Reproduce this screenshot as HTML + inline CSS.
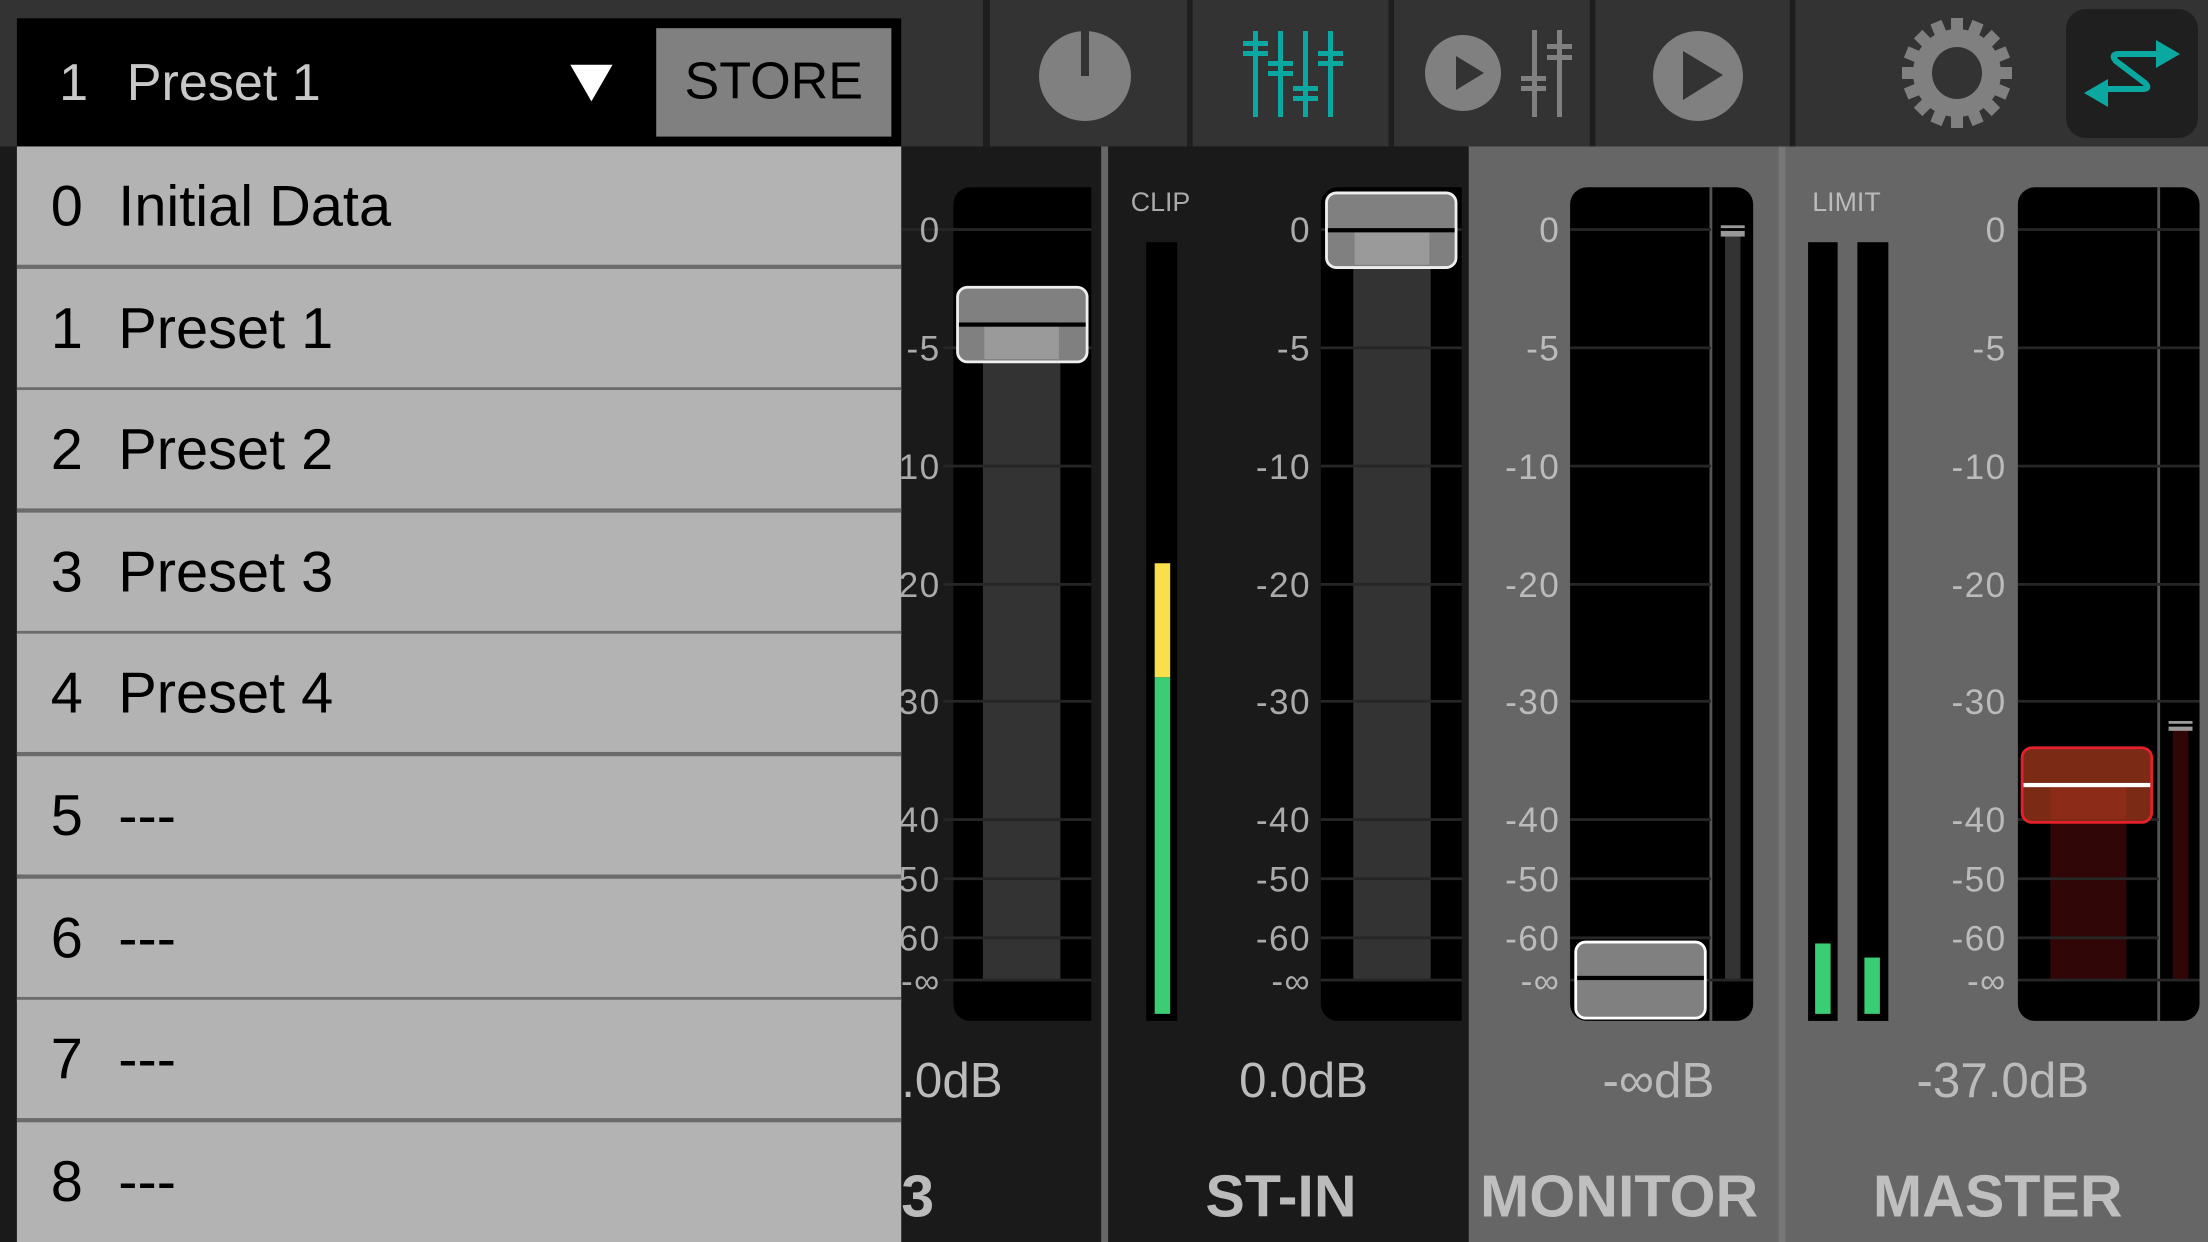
<!DOCTYPE html>
<html><head><meta charset="utf-8">
<style>
html,body{margin:0;padding:0;background:#1a1a1a;overflow:hidden;}
body{width:2208px;height:1242px;position:relative;font-family:"Liberation Sans",sans-serif;}
#w{position:absolute;left:0;top:0;width:1568px;height:882px;transform:scale(1.40816);transform-origin:0 0;}
.a{position:absolute;}
.lbl{position:absolute;width:70px;text-align:right;font-size:25px;line-height:25px;margin-top:-11px;color:#aaa;letter-spacing:1px;}
.g .lbl{color:#bbb;}
.tick{position:absolute;height:2px;background:#262626;}
.row{position:absolute;left:12px;width:628px;height:84px;background:#b3b3b3;border-bottom:3px solid #6b6b6b;font-size:41px;color:#000;}
.row span{position:absolute;top:19px;}
.row .n{left:24px}.row .t{left:72px}
.db{position:absolute;top:748px;font-size:35px;color:#bbb;white-space:nowrap;}
.nm{position:absolute;top:826px;font-size:42px;font-weight:bold;color:#bbb;white-space:nowrap;}
</style></head><body>
<div id="w">
<div class="a" style="left:0;top:0;width:1568px;height:104px;background:#333;"></div>
<div class="a" style="left:698px;top:0;width:5px;height:104px;background:#1e1e1e"></div>
<div class="a" style="left:843px;top:0;width:4px;height:104px;background:#1e1e1e"></div>
<div class="a" style="left:986px;top:0;width:4px;height:104px;background:#1e1e1e"></div>
<div class="a" style="left:1129px;top:0;width:4px;height:104px;background:#1e1e1e"></div>
<div class="a" style="left:1271px;top:0;width:4px;height:104px;background:#1e1e1e"></div>

<div class="a" style="left:640px;top:104px;width:142px;height:778px;background:#1a1a1a"></div>
<div class="a" style="left:782px;top:104px;width:5px;height:778px;background:#666"></div>
<div class="a" style="left:787px;top:104px;width:256px;height:778px;background:#1a1a1a"></div>
<div class="a" style="left:1043px;top:104px;width:220px;height:778px;background:#666"></div>
<div class="a" style="left:1263px;top:104px;width:5px;height:778px;background:#777"></div>
<div class="a" style="left:1268px;top:104px;width:300px;height:778px;background:#666"></div>

<!-- ch3 -->
<div class="a" style="left:677px;top:133px;width:98px;height:592px;background:#000;border-radius:12px 0 0 12px"></div>
<div class="a" style="left:698px;top:231px;width:55px;height:465px;background:#333"></div>
<div class="tick" style="left:640px;top:162px;width:135px"></div>
<div class="tick" style="left:670px;top:246px;width:105px"></div>
<div class="tick" style="left:670px;top:330px;width:105px"></div>
<div class="tick" style="left:670px;top:414px;width:105px"></div>
<div class="tick" style="left:670px;top:497px;width:105px"></div>
<div class="tick" style="left:670px;top:581px;width:105px"></div>
<div class="tick" style="left:670px;top:623px;width:105px"></div>
<div class="tick" style="left:670px;top:665px;width:105px"></div>
<div class="tick" style="left:670px;top:695px;width:105px"></div>
<div class="lbl" style="left:598px;top:163px">0</div>
<div class="lbl" style="left:598px;top:247px">-5</div>
<div class="lbl" style="left:598px;top:331px">10</div>
<div class="lbl" style="left:598px;top:415px">20</div>
<div class="lbl" style="left:598px;top:498px">30</div>
<div class="lbl" style="left:598px;top:582px">40</div>
<div class="lbl" style="left:598px;top:624px">50</div>
<div class="lbl" style="left:598px;top:666px">60</div>
<div class="lbl" style="left:598px;top:696px">-∞</div>
<div class="a" style="left:679px;top:203px;width:90px;height:51px;background:#808080;border:2px solid #eee;border-radius:8px;"></div>
<div class="a" style="left:699px;top:232px;width:53px;height:23px;background:#9a9a9a"></div>
<div class="a" style="left:681px;top:229px;width:90px;height:3px;background:#000"></div>
<div class="db" style="left:640px">.0dB</div>
<div class="nm" style="left:640px">3</div>

<!-- ST-IN -->
<div class="a" style="left:803px;top:134px;font-size:19px;color:#aaa">CLIP</div>
<div class="a" style="left:814px;top:172px;width:22px;height:553px;background:#000"></div>
<div class="a" style="left:820px;top:400px;width:11px;height:81px;background:#f9e04a"></div>
<div class="a" style="left:820px;top:481px;width:11px;height:239px;background:#3acd74"></div>
<div class="a" style="left:938px;top:133px;width:100px;height:592px;background:#000;border-radius:12px 0 0 12px"></div>
<div class="a" style="left:961px;top:163px;width:55px;height:533px;background:#333"></div>
<div class="tick" style="left:938px;top:162px;width:100px"></div>
<div class="tick" style="left:938px;top:246px;width:100px"></div>
<div class="tick" style="left:938px;top:330px;width:100px"></div>
<div class="tick" style="left:938px;top:414px;width:100px"></div>
<div class="tick" style="left:938px;top:497px;width:100px"></div>
<div class="tick" style="left:938px;top:581px;width:100px"></div>
<div class="tick" style="left:938px;top:623px;width:100px"></div>
<div class="tick" style="left:938px;top:665px;width:100px"></div>
<div class="tick" style="left:938px;top:695px;width:100px"></div>
<div class="lbl" style="left:861px;top:163px">0</div>
<div class="lbl" style="left:861px;top:247px">-5</div>
<div class="lbl" style="left:861px;top:331px">-10</div>
<div class="lbl" style="left:861px;top:415px">-20</div>
<div class="lbl" style="left:861px;top:498px">-30</div>
<div class="lbl" style="left:861px;top:582px">-40</div>
<div class="lbl" style="left:861px;top:624px">-50</div>
<div class="lbl" style="left:861px;top:666px">-60</div>
<div class="lbl" style="left:861px;top:696px">-∞</div>
<div class="a" style="left:941px;top:136px;width:90px;height:51px;background:#808080;border:2px solid #eee;border-radius:8px;"></div>
<div class="a" style="left:962px;top:165px;width:53px;height:23px;background:#9a9a9a"></div>
<div class="a" style="left:943px;top:162px;width:90px;height:3px;background:#000"></div>
<div class="db" style="left:880px">0.0dB</div>
<div class="nm" style="left:856px">ST-IN</div>

<!-- MONITOR -->
<div class="g">
<div class="a" style="left:1115px;top:133px;width:130px;height:592px;background:#000;border-radius:12px"></div>
<div class="a" style="left:1214px;top:133px;width:2px;height:592px;background:#555"></div>
<div class="a" style="left:1225px;top:168px;width:11px;height:528px;background:#333"></div>
<div class="a" style="left:1222px;top:160px;width:17px;height:2px;background:#999"></div>
<div class="a" style="left:1222px;top:164px;width:17px;height:4px;background:#999"></div>
<div class="tick" style="left:1115px;top:162px;width:100px"></div>
<div class="tick" style="left:1115px;top:246px;width:100px"></div>
<div class="tick" style="left:1115px;top:330px;width:100px"></div>
<div class="tick" style="left:1115px;top:414px;width:100px"></div>
<div class="tick" style="left:1115px;top:497px;width:100px"></div>
<div class="tick" style="left:1115px;top:581px;width:100px"></div>
<div class="tick" style="left:1115px;top:623px;width:100px"></div>
<div class="tick" style="left:1115px;top:665px;width:100px"></div>
<div class="tick" style="left:1115px;top:695px;width:130px"></div>
<div class="lbl" style="left:1038px;top:163px">0</div>
<div class="lbl" style="left:1038px;top:247px">-5</div>
<div class="lbl" style="left:1038px;top:331px">-10</div>
<div class="lbl" style="left:1038px;top:415px">-20</div>
<div class="lbl" style="left:1038px;top:498px">-30</div>
<div class="lbl" style="left:1038px;top:582px">-40</div>
<div class="lbl" style="left:1038px;top:624px">-50</div>
<div class="lbl" style="left:1038px;top:666px">-60</div>
<div class="lbl" style="left:1038px;top:696px">-∞</div>
<div class="a" style="left:1118px;top:668px;width:90px;height:52px;background:#808080;border:2px solid #fff;border-radius:8px;"></div>
<div class="a" style="left:1120px;top:693px;width:90px;height:3px;background:#000"></div>
<div class="db" style="left:1138px">-∞dB</div>
<div class="nm" style="left:1051px;color:#bfbfbf">MONITOR</div>

<!-- MASTER -->
<div class="a" style="left:1287px;top:134px;font-size:19px;color:#bbb">LIMIT</div>
<div class="a" style="left:1284px;top:172px;width:21px;height:553px;background:#000"></div>
<div class="a" style="left:1319px;top:172px;width:22px;height:553px;background:#000"></div>
<div class="a" style="left:1289px;top:670px;width:11px;height:50px;background:#3acd74"></div>
<div class="a" style="left:1324px;top:680px;width:11px;height:40px;background:#3acd74"></div>
<div class="a" style="left:1433px;top:133px;width:129px;height:592px;background:#000;border-radius:12px"></div>
<div class="a" style="left:1532px;top:133px;width:2px;height:592px;background:#555"></div>
<div class="a" style="left:1456px;top:557px;width:54px;height:139px;background:#300607"></div>
<div class="a" style="left:1543px;top:518px;width:11px;height:178px;background:#300607"></div>
<div class="a" style="left:1540px;top:512px;width:17px;height:2px;background:#999"></div>
<div class="a" style="left:1540px;top:516px;width:17px;height:3px;background:#999"></div>
<div class="tick" style="left:1433px;top:162px;width:129px"></div>
<div class="tick" style="left:1433px;top:246px;width:129px"></div>
<div class="tick" style="left:1433px;top:330px;width:129px"></div>
<div class="tick" style="left:1433px;top:414px;width:129px"></div>
<div class="tick" style="left:1433px;top:497px;width:129px"></div>
<div class="tick" style="left:1433px;top:581px;width:100px"></div>
<div class="tick" style="left:1433px;top:623px;width:100px"></div>
<div class="tick" style="left:1433px;top:665px;width:100px"></div>
<div class="tick" style="left:1433px;top:695px;width:129px"></div>
<div class="lbl" style="left:1355px;top:163px">0</div>
<div class="lbl" style="left:1355px;top:247px">-5</div>
<div class="lbl" style="left:1355px;top:331px">-10</div>
<div class="lbl" style="left:1355px;top:415px">-20</div>
<div class="lbl" style="left:1355px;top:498px">-30</div>
<div class="lbl" style="left:1355px;top:582px">-40</div>
<div class="lbl" style="left:1355px;top:624px">-50</div>
<div class="lbl" style="left:1355px;top:666px">-60</div>
<div class="lbl" style="left:1355px;top:696px">-∞</div>
<div class="a" style="left:1435px;top:530px;width:90px;height:51px;background:#7a2a15;border:2px solid #e5202a;border-radius:8px;"></div>
<div class="a" style="left:1456px;top:559px;width:54px;height:23px;background:#8c2c18"></div>
<div class="a" style="left:1437px;top:556px;width:90px;height:3px;background:#fff"></div>
<div class="db" style="left:1361px">-37.0dB</div>
<div class="nm" style="left:1330px;color:#bfbfbf">MASTER</div>
</div>

<!-- preset dropdown -->
<div class="a" style="left:12px;top:13px;width:628px;height:91px;background:#000"></div>
<div class="a" style="left:42px;top:38px;font-size:37px;color:#c8c8c8;">1</div>
<div class="a" style="left:90px;top:38px;font-size:37px;color:#c8c8c8;white-space:pre">Preset 1</div>
<div class="a" style="left:405px;top:46px;width:0;height:0;border-left:15px solid transparent;border-right:15px solid transparent;border-top:26px solid #fff"></div>
<div class="a" style="left:466px;top:20px;width:167px;height:77px;background:#808080"></div>
<div class="a" style="left:466px;top:37px;width:167px;text-align:center;font-size:37px;color:#000">STORE</div>

<div class="row" style="top:104px"><span class="n">0</span><span class="t">Initial Data</span></div>
<div class="row" style="top:191px"><span class="n">1</span><span class="t">Preset 1</span></div>
<div class="row" style="top:277px"><span class="n">2</span><span class="t">Preset 2</span></div>
<div class="row" style="top:364px"><span class="n">3</span><span class="t">Preset 3</span></div>
<div class="row" style="top:450px"><span class="n">4</span><span class="t">Preset 4</span></div>
<div class="row" style="top:537px"><span class="n">5</span><span class="t">---</span></div>
<div class="row" style="top:624px"><span class="n">6</span><span class="t">---</span></div>
<div class="row" style="top:710px"><span class="n">7</span><span class="t">---</span></div>
<div class="row" style="top:797px;height:88px;border-bottom:none"><span class="n">8</span><span class="t">---</span></div>
</div>

<svg class="a" style="left:0;top:0" width="2208" height="146" viewBox="0 0 2208 146">
 <ellipse cx="1085" cy="76" rx="46" ry="45" fill="#808080"/>
 <rect x="1081" y="31" width="8" height="45" fill="#333"/>
 <g fill="#0aa8a0">
  <rect x="1253" y="31" width="5" height="86"/><rect x="1243" y="41" width="25" height="5"/><rect x="1243" y="51" width="25" height="5"/>
  <rect x="1278" y="31" width="5" height="86"/><rect x="1268" y="61" width="25" height="5"/><rect x="1268" y="71" width="25" height="5"/>
  <rect x="1303" y="31" width="5" height="86"/><rect x="1293" y="86" width="25" height="5"/><rect x="1293" y="96" width="25" height="5"/>
  <rect x="1328" y="31" width="5" height="86"/><rect x="1318" y="51" width="25" height="5"/><rect x="1318" y="61" width="25" height="5"/>
 </g>
 <circle cx="1463" cy="73" r="38" fill="#808080"/>
 <polygon points="1456,56 1484,73 1456,90" fill="#333"/>
 <g fill="#808080">
  <rect x="1532" y="30" width="5" height="87"/><rect x="1521" y="76" width="25" height="5"/><rect x="1521" y="86" width="25" height="5"/>
  <rect x="1557" y="30" width="5" height="87"/><rect x="1547" y="44" width="25" height="5"/><rect x="1547" y="55" width="25" height="5"/>
 </g>
 <circle cx="1698" cy="76" r="45" fill="#808080"/>
 <polygon points="1683,51 1723,75 1683,100" fill="#333"/>
 <g transform="translate(1957,73)" fill="#808080">
  <circle r="44"/>
  <g><rect x="-6" y="-55" width="12" height="110"/><rect x="-55" y="-6" width="110" height="12"/>
  <rect x="-6" y="-55" width="12" height="110" transform="rotate(45)"/><rect x="-6" y="-55" width="12" height="110" transform="rotate(-45)"/>
  <rect x="-6" y="-55" width="12" height="110" transform="rotate(22.5)"/><rect x="-6" y="-55" width="12" height="110" transform="rotate(-22.5)"/>
  <rect x="-6" y="-55" width="12" height="110" transform="rotate(67.5)"/><rect x="-6" y="-55" width="12" height="110" transform="rotate(-67.5)"/></g>
  <ellipse rx="25" ry="26" fill="#333"/>
 </g>
 <rect x="2066" y="9" width="132" height="129" rx="20" fill="#1f1f1f"/>
 <path d="M2158 54 H2119 q-9 0 -3 7 L2145 83 q6 6 -3 6 H2106" fill="none" stroke="#0aa8a0" stroke-width="6"/>
 <polygon points="2156,40 2180,54 2156,68" fill="#0aa8a0"/>
 <polygon points="2108,79 2084,93 2108,107" fill="#0aa8a0"/>
</svg>
</body></html>
